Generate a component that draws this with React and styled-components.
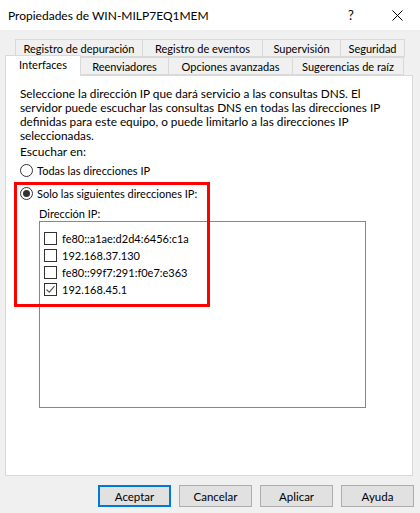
import styled, { createGlobalStyle } from 'styled-components';

const Global = createGlobalStyle`
  html, body {
    margin: 0;
    padding: 0;
    background: #f0f0f0;
  }
  * {
    box-sizing: border-box;
  }
`;

const rowOne = [
  { label: 'Registro de depuración', w: 128 },
  { label: 'Registro de eventos', w: 121 },
  { label: 'Supervisión', w: 79 },
  { label: 'Seguridad', w: 65 },
];

const rowTwo = [
  { label: 'Interfaces', w: 76, active: true },
  { label: 'Reenviadores', w: 89 },
  { label: 'Opciones avanzadas', w: 125 },
  { label: 'Sugerencias de raíz', w: 112 },
];

const addresses = [
  { ip: 'fe80::a1ae:d2d4:6456:c1a', checked: false },
  { ip: '192.168.37.130', checked: false },
  { ip: 'fe80::99f7:291:f0e7:e363', checked: false },
  { ip: '192.168.45.1', checked: true },
];

const Window = styled.div`
  width: 420px;
  height: 513px;
  background: #f0f0f0;
  font-family: Lato, "Liberation Sans", sans-serif;
  font-size: 11px;
  color: #000;
  display: flex;
  flex-direction: column;
  overflow: hidden;
`;

const TitleBar = styled.div`
  height: 30px;
  background: #fff;
  display: flex;
  align-items: center;
  padding-left: 8px;
`;

const Title = styled.div`
  flex: 1;
  font-size: 12px;
`;

const TitleButton = styled.div`
  width: 46px;
  height: 30px;
  display: flex;
  align-items: center;
  justify-content: center;
  font-size: 13px;
  color: #000;
`;

const Body = styled.div`
  padding: 9px 7px 0 5px;
`;

const TabRow = styled.div`
  display: flex;
  align-items: flex-end;
  height: 18px;
  margin-left: ${(p) => p.$indent}px;
  position: relative;
`;

const Tab = styled.div`
  width: ${(p) => p.$w}px;
  height: ${(p) => (p.$active ? 21 : 18)}px;
  margin-left: -1px;
  margin-bottom: ${(p) => (p.$active ? -1 : 0)}px;
  background: ${(p) => (p.$active ? '#fff' : '#f0f0f0')};
  border: 1px solid #d9d9d9;
  border-bottom: ${(p) => (p.$active ? 'none' : '1px solid #d9d9d9')};
  display: flex;
  align-items: ${(p) => (p.$active ? 'flex-start' : 'center')};
  padding-top: ${(p) => (p.$active ? 2 : 0)}px;
  justify-content: center;
  white-space: nowrap;
  position: relative;
  z-index: ${(p) => (p.$active ? 2 : 1)};
  &:first-child {
    margin-left: 0;
  }
`;

const Panel = styled.div`
  height: 401px;
  background: #fff;
  border: 1px solid #d9d9d9;
  position: relative;
  padding: 11px 14px 0 14px;
`;

const Paragraph = styled.p`
  margin: 0;
  font-size: 11.8px;
  line-height: 14px;
  white-space: nowrap;
`;

const Label = styled.div`
  font-size: ${(p) => (p.$lead ? 12 : 11)}px;
  line-height: 14px;
  margin-top: ${(p) => p.$top}px;
  margin-left: ${(p) => p.$indent || 0}px;
`;

const RadioRow = styled.label`
  display: flex;
  align-items: center;
  gap: 4px;
  height: 17px;
  margin-top: ${(p) => p.$top}px;
`;

const Radio = styled.span`
  width: 13px;
  height: 13px;
  border-radius: 50%;
  border: 1px solid #333;
  display: flex;
  align-items: center;
  justify-content: center;
  &::after {
    content: '';
    width: 7px;
    height: 7px;
    border-radius: 50%;
    background: ${(p) => (p.$checked ? '#333' : 'transparent')};
  }
`;

const ListBox = styled.div`
  margin-left: 19px;
  width: 327px;
  height: 187px;
  border: 1px solid #828790;
  padding: 8px 0 0 4px;
`;

const Item = styled.div`
  display: flex;
  align-items: center;
  height: 17px;
  gap: 5px;
`;

const Check = styled.span`
  width: 13px;
  height: 13px;
  border: 1px solid #333;
  display: flex;
  align-items: center;
  justify-content: center;
  background: #fff;
`;

const Highlight = styled.div`
  position: absolute;
  left: 8px;
  top: 106px;
  width: 196px;
  height: 125px;
  border: 3px solid #ff0000;
  pointer-events: none;
`;

const ButtonBar = styled.div`
  display: flex;
  justify-content: flex-end;
  gap: 8px;
  padding: 9px 6px 0 0;
`;

const Button = styled.button`
  width: 73px;
  height: 22px;
  font-family: inherit;
  font-size: 11.5px;
  color: #000;
  background: #e1e1e1;
  border: ${(p) => (p.$primary ? '2px solid #0078d7' : '1px solid #adadad')};
  padding: 0;
`;

const CheckMark = () => (
  <svg width="11" height="11" viewBox="0 0 11 11">
    <path d="M1.5 5.5 L4.2 8.2 L9.5 2.2" fill="none" stroke="#555" strokeWidth="1.1" />
  </svg>
);

export default function App() {
  return (
    <Window>
      <Global />
      <TitleBar>
        <Title>Propiedades de WIN-MILP7EQ1MEM</Title>
        <TitleButton>?</TitleButton>
        <TitleButton>
          <svg width="11" height="11" viewBox="0 0 11 11">
            <path d="M0.5 0.5 L10.5 10.5 M10.5 0.5 L0.5 10.5" stroke="#000" strokeWidth="1" />
          </svg>
        </TitleButton>
      </TitleBar>
      <Body>
        <TabRow $indent={10}>
          {rowOne.map((t) => (
            <Tab key={t.label} $w={t.w}>{t.label}</Tab>
          ))}
        </TabRow>
        <TabRow $indent={0}>
          {rowTwo.map((t) => (
            <Tab key={t.label} $w={t.w} $active={t.active}>{t.label}</Tab>
          ))}
        </TabRow>
        <Panel>
          <Paragraph>
            Seleccione la dirección IP que dará servicio a las consultas DNS. El
            <br />
            servidor puede escuchar las consultas DNS en todas las direcciones IP
            <br />
            definidas para este equipo, o puede limitarlo a las direcciones IP
            <br />
            seleccionadas.
          </Paragraph>
          <Label $lead $top={2}>Escuchar en:</Label>
          <RadioRow $top={3}>
            <Radio />
            Todas las direcciones IP
          </RadioRow>
          <RadioRow $top={6}>
            <Radio $checked />
            Solo las siguientes direcciones IP:
          </RadioRow>
          <Label $top={5} $indent={19}>Dirección IP:</Label>
          <ListBox>
            {addresses.map((a) => (
              <Item key={a.ip}>
                <Check>{a.checked && <CheckMark />}</Check>
                {a.ip}
              </Item>
            ))}
          </ListBox>
          <Highlight />
        </Panel>
      </Body>
      <ButtonBar>
        <Button $primary>Aceptar</Button>
        <Button>Cancelar</Button>
        <Button>Aplicar</Button>
        <Button>Ayuda</Button>
      </ButtonBar>
    </Window>
  );
}
